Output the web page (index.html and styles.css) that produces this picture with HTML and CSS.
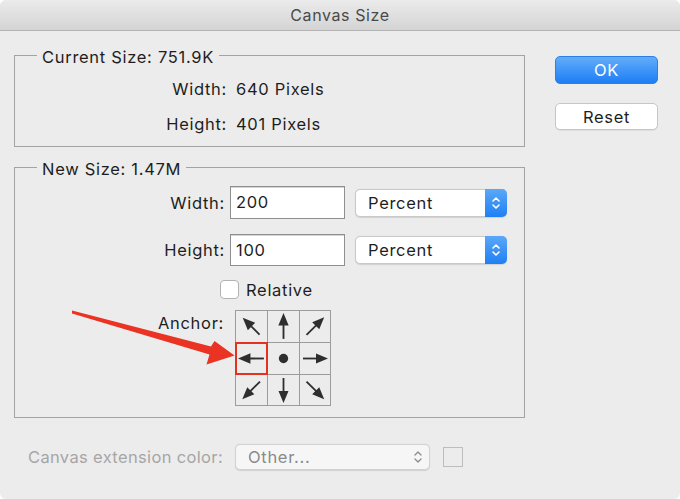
FILE: index.html
```html
<!DOCTYPE html>
<html>
<head>
<meta charset="utf-8">
<link rel="stylesheet" href="styles.css">
</head>
<body>
<div class="window">
  <div class="titlebar">Canvas Size</div>
  <div class="content">
    <div class="main">
      <div class="group current">
        <div class="legend">Current Size: 751.9K</div>
        <div class="row info first"><span class="label">Width:</span><span class="value">640 Pixels</span></div>
        <div class="row info"><span class="label">Height:</span><span class="value">401 Pixels</span></div>
      </div>
      <div class="group newsize">
        <div class="legend">New Size: 1.47M</div>
        <div class="row field first">
          <span class="label">Width:</span>
          <div class="input">200</div>
          <div class="select">Percent<span class="stepper"><svg width="10" height="16" viewBox="0 0 10 16"><path d="M2 6 L5 3 L8 6 M2 10 L5 13 L8 10" fill="none" stroke="#fff" stroke-width="1.6" stroke-linecap="round" stroke-linejoin="round"/></svg></span></div>
        </div>
        <div class="row field second">
          <span class="label">Height:</span>
          <div class="input tall">100</div>
          <div class="select">Percent<span class="stepper"><svg width="10" height="16" viewBox="0 0 10 16"><path d="M2 6 L5 3 L8 6 M2 10 L5 13 L8 10" fill="none" stroke="#fff" stroke-width="1.6" stroke-linecap="round" stroke-linejoin="round"/></svg></span></div>
        </div>
        <div class="row check"><span class="checkbox"></span><span>Relative</span></div>
        <div class="row anchor">
          <span class="label">Anchor:</span>
          <div class="grid">
            <div class="cell"><svg viewBox="0 0 30 30"><g transform="rotate(-135 15 15)"><line x1="4" y1="15" x2="17" y2="15"/><polygon points="27,15 15,10 15,20"/></g></svg></div>
            <div class="cell"><svg viewBox="0 0 30 30"><g transform="rotate(-90 15 15)"><line x1="3" y1="15" x2="17" y2="15"/><polygon points="28,15 16,10 16,20"/></g></svg></div>
            <div class="cell"><svg viewBox="0 0 30 30"><g transform="rotate(-45 15 15)"><line x1="3" y1="15" x2="17" y2="15"/><polygon points="28,15 16,10 16,20"/></g></svg></div>
            <div class="cell selected"><svg viewBox="0 0 30 30"><g transform="rotate(180 15 15)"><line x1="3" y1="15" x2="17" y2="15"/><polygon points="28,15 16,10 16,20"/></g></svg></div>
            <div class="cell"><svg viewBox="0 0 30 30"><circle cx="15" cy="15" r="4.5"/></svg></div>
            <div class="cell"><svg viewBox="0 0 30 30"><line x1="3" y1="15" x2="17" y2="15"/><polygon points="28,15 16,10 16,20"/></svg></div>
            <div class="cell"><svg viewBox="0 0 30 30"><g transform="rotate(135 15 15)"><line x1="3" y1="15" x2="17" y2="15"/><polygon points="28,15 16,10 16,20"/></g></svg></div>
            <div class="cell"><svg viewBox="0 0 30 30"><g transform="rotate(90 15 15)"><line x1="3" y1="15" x2="17" y2="15"/><polygon points="28,15 16,10 16,20"/></g></svg></div>
            <div class="cell"><svg viewBox="0 0 30 30"><g transform="rotate(45 15 15)"><line x1="3" y1="15" x2="17" y2="15"/><polygon points="28,15 16,10 16,20"/></g></svg></div>
          </div>
        </div>
      </div>
      <div class="ext">
        <span class="ext-label">Canvas extension color:</span>
        <div class="select disabled">Other...<span class="chev"><svg width="10" height="16" viewBox="0 0 10 16"><path d="M2 6 L5 3 L8 6 M2 10 L5 13 L8 10" fill="none" stroke="#8a8a8a" stroke-width="1.3" stroke-linecap="round" stroke-linejoin="round"/></svg></span></div>
        <span class="swatch"></span>
      </div>
    </div>
    <div class="buttons">
      <button class="btn ok">OK</button>
      <button class="btn reset">Reset</button>
    </div>
  </div>
  <svg class="annotation" width="680" height="499" viewBox="0 0 680 499">
    <polygon points="72,310.5 211,346.5 214.5,341 234.5,355.5 206.5,364.5 209.5,354.5 72,313.5" fill="#ea3323"/>
  </svg>
</div>
</body>
</html>
```
FILE: styles.css
```css
* { box-sizing: border-box; }
html, body { margin: 0; padding: 0; background: #ffffff; }
body {
  font-family: Inter, "Liberation Sans", Arial, sans-serif;
  font-size: 16.5px;
  letter-spacing: 0.7px;
  color: #1e1e1e;
}
.window {
  position: relative;
  width: 680px;
  height: 499px;
  background: #ececec;
  border-radius: 6px;
  overflow: hidden;
}
.titlebar {
  height: 31px;
  line-height: 30px;
  text-align: center;
  font-size: 16px;
  letter-spacing: 0.6px;
  color: #4a4a4a;
  background: linear-gradient(#ebebeb, #d4d4d4);
  border-bottom: 1px solid #b3b3b3;
}
.content {
  display: flex;
  padding-left: 14px;
}
.main {
  width: 511px;
  padding-top: 24px;
}
.buttons {
  display: flex;
  flex-direction: column;
  margin-left: 30px;
  padding-top: 25px;
  gap: 19px;
}
.btn {
  width: 103px;
  height: 28px;
  border-radius: 5px;
  font-family: inherit;
  font-size: 16.5px;
  letter-spacing: 0.7px;
  padding: 0;
}
.ok {
  color: #ffffff;
  background: linear-gradient(#62adfa, #1e7ef5);
  border: 1px solid #2b7fe8;
}
.reset {
  color: #1e1e1e;
  background: #ffffff;
  border: 1px solid #c6c6c6;
  box-shadow: 0 1px 0 rgba(0,0,0,0.06);
  height: 27px;
}
.group {
  border: 1px solid #a3a3a3;
}
.legend {
  display: block;
  width: fit-content;
  margin: -9px 0 0 22px;
  padding: 0 5px;
  line-height: 20px;
  height: 20px;
  background: #ececec;
}
.row { display: flex; align-items: center; }
.info { height: 35px; }
.info.first { margin-top: 4px; }
.current { padding-bottom: 5px; }
.current .label { width: 212px; text-align: right; }
.current .value { margin-left: 9px; }

.newsize { margin-top: 20px; padding-bottom: 11px; }
.field .label { width: 210px; text-align: right; }
.field.first { margin-top: 7px; }
.field.second { margin-top: 15px; }
.input {
  margin-left: 5px;
  width: 115px;
  height: 33px;
  line-height: 31px;
  padding-left: 5px;
  background: #ffffff;
  border: 1px solid #8f8f8f;
  box-shadow: inset 0 1px 0 #d6d6d6;
}
.input.tall { height: 32px; line-height: 30px; }
.select {
  position: relative;
  margin-left: 10px;
  width: 152px;
  height: 28px;
  line-height: 26px;
  padding-left: 12px;
  background: #ffffff;
  border: 1px solid #c9c9c9;
  border-radius: 5px;
  box-shadow: 0 0.5px 1px rgba(0,0,0,0.12);
}
.stepper {
  position: absolute;
  top: -1px;
  right: -1px;
  bottom: -1px;
  width: 22px;
  background: linear-gradient(#5aa8f8, #1f7ff3);
  border-radius: 0 5px 5px 0;
  display: flex;
  align-items: center;
  justify-content: center;
}
.stepper svg { display: block; }
.check { margin-top: 14px; margin-left: 205px; height: 19px; }
.checkbox {
  width: 19px;
  height: 19px;
  background: #ffffff;
  border: 1px solid #b2b2b2;
  border-radius: 4px;
  margin-right: 7px;
}
.anchor { margin-top: 11px; align-items: flex-start; }
.anchor .label { width: 209px; text-align: right; line-height: 20px; margin-top: 3px; }
.grid {
  margin-left: 11px;
  display: grid;
  grid-template-columns: 31px 31px 30px;
  grid-template-rows: 31px 31px 30px;
  gap: 1px;
  padding: 1px;
  background: #9c9c9c;
}
.cell { background: #ececec; position: relative; }
.cell svg { display: block; width: 100%; height: 100%; }
.cell line { stroke: #2e2e2e; stroke-width: 1.8; }
.cell polygon, .cell circle { fill: #2e2e2e; }
.cell.selected { outline: 2px solid #e3321f; outline-offset: -1px; }

.ext {
  display: flex;
  align-items: center;
  margin-top: 26px;
  height: 26px;
}
.ext-label { color: #a6a6a6; margin-left: 14px; width: 207px; white-space: nowrap; letter-spacing: 0.35px; }
.select.disabled {
  margin-left: 0;
  width: 195px;
  height: 26px;
  line-height: 24px;
  color: #8a8a8a;
  background: #f6f6f6;
  border-color: #d2d2d2;
}
.chev {
  position: absolute;
  right: 6px;
  top: 4px;
}
.chev svg { display: block; }
.swatch {
  margin-left: 13px;
  width: 20px;
  height: 20px;
  border: 1px solid #bdbdbd;
  background: #ececec;
}
.annotation {
  position: absolute;
  left: 0;
  top: 0;
  pointer-events: none;
}
```
